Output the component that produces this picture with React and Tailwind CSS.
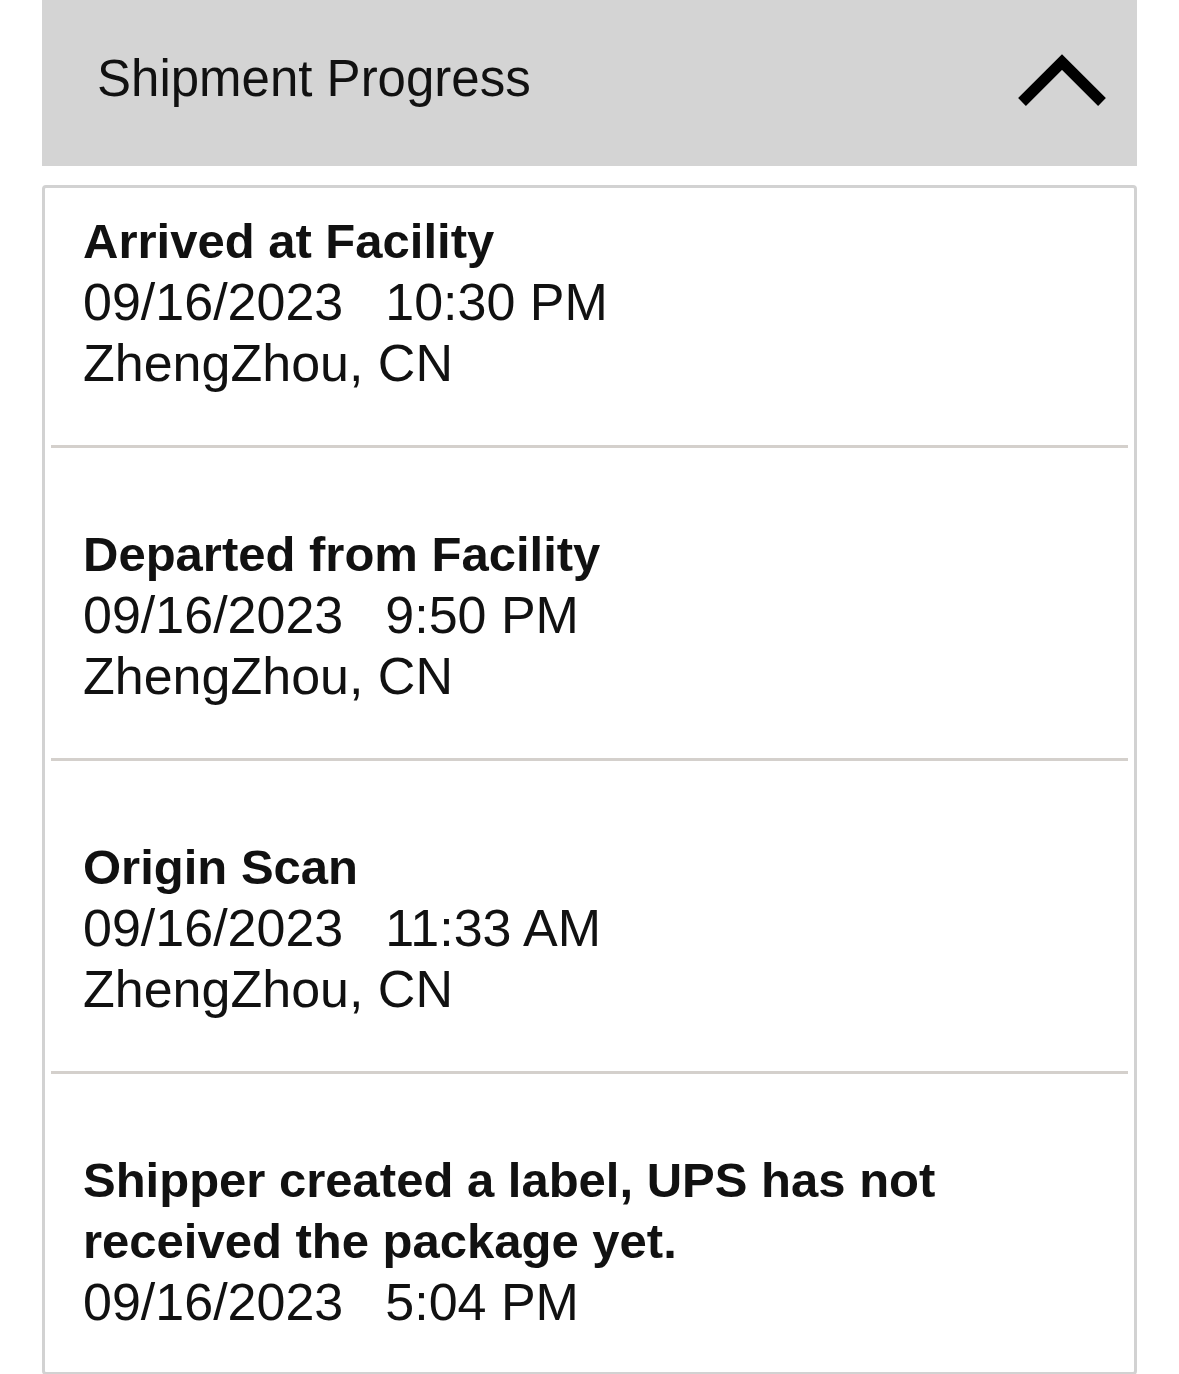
import React from "react";

const events = [
  {
    title: "Arrived at Facility",
    date: "09/16/2023",
    time: "10:30 PM",
    place: "ZhengZhou, CN",
  },
  {
    title: "Departed from Facility",
    date: "09/16/2023",
    time: "9:50 PM",
    place: "ZhengZhou, CN",
  },
  {
    title: "Origin Scan",
    date: "09/16/2023",
    time: "11:33 AM",
    place: "ZhengZhou, CN",
  },
  {
    title: "Shipper created a label, UPS has not received the package yet.",
    date: "09/16/2023",
    time: "5:04 PM",
  },
];

export default function App() {
  return (
    <div
      className="w-[1179px] min-h-[1374px] bg-white px-[42px] text-[#111]"
      style={{ fontFamily: '"Liberation Sans", Arial, sans-serif' }}
    >
      {/* HEADER */}
      <div className="h-[166px] bg-[#d4d4d4] flex items-center justify-between pl-[55px] pr-[30px] pb-[10px]">
        <span className="text-[51px] leading-none">Shipment Progress</span>
        <svg width="90" height="56" viewBox="0 0 90 56" className="mt-[4px]">
          <polyline
            points="5,50 45,10 85,50"
            fill="none"
            stroke="#000"
            strokeWidth="11"
            strokeLinejoin="miter"
          />
        </svg>
      </div>

      {/* EVENT LIST */}
      <div className="mt-[19px] border-[3px] border-[#d2d2d2] rounded-[4px] px-[6px]">
        {events.map((e, i) => (
          <div
            key={i}
            className={
              (i === 0 ? "pt-[23px] " : "pt-[76px] ") +
              (i === events.length - 1
                ? "pb-[39px]"
                : "pb-[51px] border-b-[3px] border-[#d4d0cc]")
            }
          >
            <div className="pl-[32px] pr-[150px] text-[52px] leading-[61px]">
              <p className="font-bold text-[49px]">{e.title}</p>
              <p>
                {e.date}
                <span className="ml-[42px]">{e.time}</span>
              </p>
              {e.place && <p>{e.place}</p>}
            </div>
          </div>
        ))}
      </div>
    </div>
  );
}
